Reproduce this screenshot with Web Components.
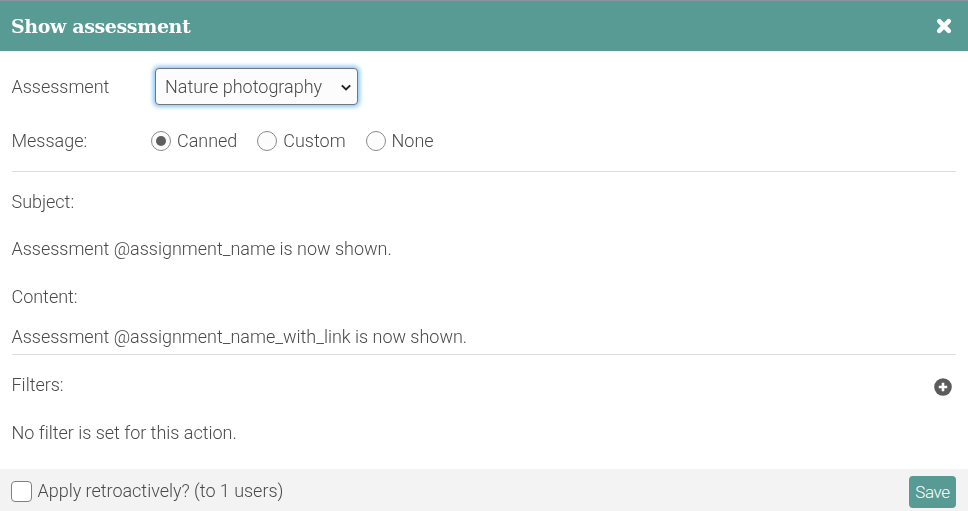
<!DOCTYPE html>
<html><head><meta charset="utf-8"><style>
html,body{margin:0;padding:0;height:511px;overflow:hidden;background:#fff}
body{font:300 18px/24px Roboto,sans-serif;color:#4a4a4a}
</style></head><body>
<show-dialog heading="Show assessment">
  <form-row label="Assessment" class="first"><pick-list value="Nature photography"></pick-list></form-row>
  <form-row label="Message:" class="second"><radio-set options="Canned,Custom,None" checked="Canned"></radio-set></form-row>
  <rule-line></rule-line>
  <text-line top="18">Subject:</text-line>
  <text-line top="23">Assessment @assignment_name is now shown.</text-line>
  <text-line top="24">Content:</text-line>
  <text-line top="16">Assessment @assignment_name_with_link is now shown.</text-line>
  <rule-line top="5"></rule-line>
  <filter-head>Filters:</filter-head>
  <text-line top="24">No filter is set for this action.</text-line>
  <dialog-foot slot="foot" label="Apply retroactively? (to 1 users)"></dialog-foot>
</show-dialog>
<script>
function el(name, html, init){
  customElements.define(name, class extends HTMLElement{
    connectedCallback(){
      if(this.shadowRoot) return;
      const r=this.attachShadow({mode:'open'});
      r.innerHTML=typeof html==='function'?html(this):html;
      if(init) init(this,r);
    }
  });
}
el('show-dialog',h=>`<style>
:host{display:flex;flex-direction:column;width:968px;height:511px;box-sizing:border-box;padding-top:1px;background:linear-gradient(#8a93a3 0 1px,#fff 1px)}
header{flex:none;height:50px;background:#589a94;color:#fff;display:flex;align-items:center;justify-content:space-between;padding:0 15px 0 11px}
h1{margin:0;font:700 19px/24px "DejaVu Serif",serif;letter-spacing:-.38px;will-change:transform}
svg{display:block}
main{flex:1;padding:0 12px 0 11.5px;min-height:0;will-change:transform;letter-spacing:-.02px}
</style><header><h1>${h.getAttribute('heading')}</h1>
<svg width="18" height="18" viewBox="0 0 18 18" aria-hidden="true"><path d="M4.2 4.2 13.8 13.8M13.8 4.2 4.2 13.8" stroke="#fff" stroke-width="4.6" stroke-linecap="round"/></svg></header>
<main><slot></slot></main><slot name="foot"></slot>`);
el('form-row',h=>`<style>
:host{display:flex;align-items:center}
:host(.first){padding-top:17px;height:37px}
:host(.second){padding-top:17px;height:37px}
span{flex:none;width:143.5px}
</style><span>${h.getAttribute('label')}</span><slot></slot>`);
el('pick-list',h=>`<style>
:host{display:block;position:relative}
select{display:block;appearance:none;-webkit-appearance:none;width:203px;height:37px;box-sizing:border-box;margin:0;padding:0 4px 0 9px;font:300 18px Roboto,sans-serif;color:#4a4a4a;background:#fcfcfc;border:1px solid #6f7680;border-radius:4px;outline:none;box-shadow:0 0 4px 2px #8cc4f5}
svg{position:absolute;right:6px;top:16px;pointer-events:none}
</style><select><option>${h.getAttribute('value')}</option></select>
<svg width="12" height="7" viewBox="0 0 12 7" aria-hidden="true"><path d="M1.8 1.4 6 5.4 10.2 1.4" fill="none" stroke="#222" stroke-width="2"/></svg>`);
el('radio-set',h=>{
  const c=h.getAttribute('checked');
  return `<style>
:host{display:flex;margin-left:-4px}
label{display:flex;align-items:center;margin-right:20px}
i{display:block;width:20px;height:20px;box-sizing:border-box;border:1px solid #8a8a8a;border-radius:50%;background:#fcfcfc;margin-right:6px;position:relative}
i.on::after{content:"";position:absolute;left:4px;top:4px;width:10px;height:10px;border-radius:50%;background:#5f5f5f}
</style>`+h.getAttribute('options').split(',').map(o=>`<label><i class="${o===c?'on':''}"></i>${o}</label>`).join('');
});
el('rule-line',h=>`<style>:host{display:block;height:1px;background:#ddd;margin-top:${h.getAttribute('top')||'12'}px}</style>`);
el('text-line',h=>`<style>:host{display:block;margin-top:${h.getAttribute('top')}px}</style><slot></slot>`);
el('filter-head',`<style>:host{display:flex;justify-content:space-between;align-items:center;margin-top:18px;height:24px}
svg{display:block;margin:3px 4.5px 0 0}</style><slot></slot>
<svg width="18" height="18" viewBox="0 0 18 18" aria-hidden="true"><circle cx="9" cy="9" r="8.8" fill="#5b5b5b"/><path d="M9 4.8V13.2M4.8 9H13.2" stroke="#fff" stroke-width="2.6"/></svg>`);
el('dialog-foot',h=>`<style>
:host{flex:none;display:flex;align-items:center;justify-content:space-between;height:42px;box-sizing:border-box;padding:3px 12px 0 11px;background:#f3f3f3}
label{display:flex;align-items:center;margin-top:-2px;will-change:transform;letter-spacing:-.02px}
i{display:block;width:21px;height:21px;box-sizing:border-box;border:1px solid #808080;border-radius:4px;background:#fff;margin-right:5.5px}
button{display:block;width:47px;height:32px;padding:0;border:0;border-radius:4px;background:#589a94;color:#fff;font:300 17px Roboto,sans-serif;letter-spacing:-.4px}
</style><label><i></i><span>${h.getAttribute('label')}</span></label><button>Save</button>`);
</script></body></html>
